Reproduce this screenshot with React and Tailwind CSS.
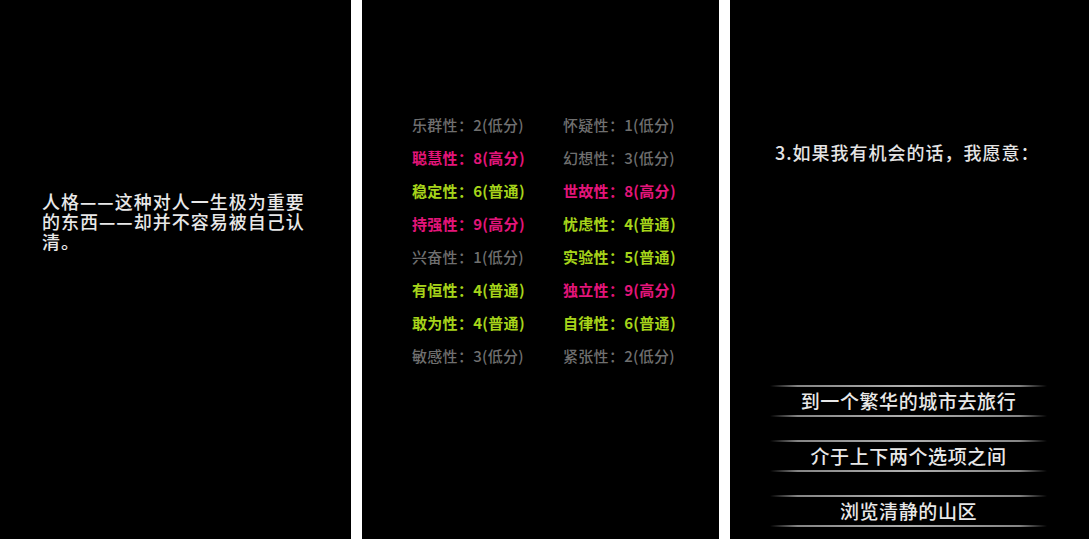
import React from "react";

const FONT = { fontFamily: '"Noto Sans CJK SC", "Noto Sans", sans-serif' };

const LOW = "text-[#6f6f6f] font-medium";
const HIGH = "text-[#e3157a] font-bold";
const MID = "text-[#a6d41a] font-bold";

const traits = [
  ["乐群性：2(低分)", LOW, "怀疑性：1(低分)", LOW],
  ["聪慧性：8(高分)", HIGH, "幻想性：3(低分)", LOW],
  ["稳定性：6(普通)", MID, "世故性：8(高分)", HIGH],
  ["持强性：9(高分)", HIGH, "忧虑性：4(普通)", MID],
  ["兴奋性：1(低分)", LOW, "实验性：5(普通)", MID],
  ["有恒性：4(普通)", MID, "独立性：9(高分)", HIGH],
  ["敢为性：4(普通)", MID, "自律性：6(普通)", MID],
  ["敏感性：3(低分)", LOW, "紧张性：2(低分)", LOW],
];

const options = ["到一个繁华的城市去旅行", "介于上下两个选项之间", "浏览清静的山区"];

function Line() {
  return (
    <div className="h-[2px] w-full bg-[linear-gradient(to_right,transparent,#858585_10%,#b0b0b0_50%,#858585_90%,transparent)]" />
  );
}

function Dashes() {
  return (
    <>
      <span className="inline-block font-bold">—</span>
      <span className="inline-block font-bold">—</span>
    </>
  );
}

export default function App() {
  return (
    <div className="flex h-[539px] w-[1089px] gap-[11px] bg-white overflow-hidden" style={FONT}>
      {/* Panel 1 */}
      <div className="h-full w-[351px] shrink-0 bg-black pl-[42px] pt-[191px]">
        <div className="text-[18px] leading-[20px] tracking-[1px] font-medium text-[#e8e8e8] whitespace-nowrap">
          <div>人格<Dashes />这种对人一生极为重要</div>
          <div>的东西<Dashes />却并不容易被自己认</div>
          <div>清。</div>
        </div>
      </div>

      {/* Panel 2 */}
      <div className="h-full w-[357px] shrink-0 bg-black pl-[50px] pt-[109px]">
        <div className="grid grid-cols-[151px_auto] text-[15px] tracking-[0.3px]">
          {traits.map(([a, ca, b, cb], i) => (
            <React.Fragment key={i}>
              <div className={`flex h-[33px] items-center ${ca}`}>{a}</div>
              <div className={`flex h-[33px] items-center ${cb}`}>{b}</div>
            </React.Fragment>
          ))}
        </div>
      </div>

      {/* Panel 3 */}
      <div className="flex h-full w-[359px] shrink-0 flex-col bg-black pt-[140px]">
        <div className="pl-[45px] text-[18px] leading-[24px] tracking-[1px] font-medium text-[#e4e4e4]">
          3.如果我有机会的话，我愿意：
        </div>
        <div className="mt-[221px] flex w-[277px] flex-col gap-[23px] ml-[40px]">
          {options.map((o) => (
            <div key={o} className="flex flex-col">
              <Line />
              <div className="flex h-[28px] items-center justify-center text-[19px] tracking-[0.6px] font-medium text-[#e8e8e8]">
                {o}
              </div>
              <Line />
            </div>
          ))}
        </div>
      </div>
    </div>
  );
}
